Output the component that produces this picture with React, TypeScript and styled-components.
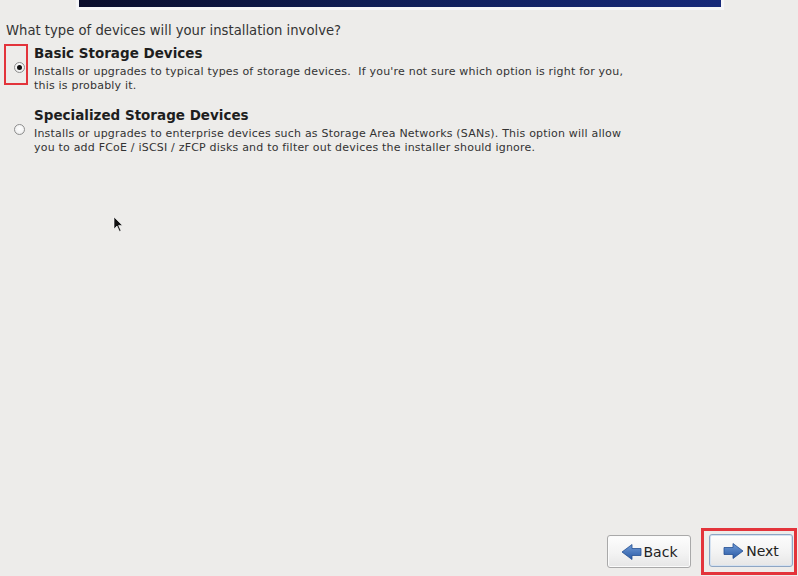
import * as React from 'react'
import styled, { createGlobalStyle } from 'styled-components'

const GlobalStyle = createGlobalStyle`
  html, body {
    margin: 0;
    padding: 0;
    background: #edecea;
  }

  body {
    font-family: 'DejaVu Sans', 'Liberation Sans', sans-serif;
    color: #2c2c2c;
  }
`

const Page = styled.div`
  position: relative;
  width: 798px;
  height: 576px;
  display: flex;
  flex-direction: column;
  overflow: hidden;
  background: #edecea;
`

const BannerFrame = styled.div`
  margin-left: 76px;
  width: 642px;
  padding: 0 3px 3px;
  background: #f5f5f7;
`

const Banner = styled.div`
  height: 7px;
  background: linear-gradient(to right, #0a0d2c 0%, #0f1d55 45%, #16297a 100%);
`

const Question = styled.p`
  margin: 13px 0 0 6px;
  font-size: 13.2px;
  line-height: 16px;
  color: #333;
`

const Options = styled.div`
  display: flex;
  flex-direction: column;
  gap: 14px;
  margin-top: 5px;
`

const Option = styled.div`
  display: flex;
  align-items: flex-start;
  margin-left: 4px;
`

const RadioCell = styled('div')<{ $highlight?: boolean }>`
  width: 24px;
  height: 41px;
  box-sizing: border-box;
  border: 2px solid ${ props => props.$highlight ? '#e3343b' : 'transparent' };
  display: flex;
  align-items: center;
  padding: 6px 0 0 8px;
  margin-right: 6px;
`

const Radio = styled('span')<{ $checked?: boolean }>`
  width: 11px;
  height: 11px;
  box-sizing: border-box;
  border-radius: 50%;
  border: 1px solid #8e8e8e;
  background: radial-gradient(circle at 50% 40%, #ffffff 0%, #f2f2f2 60%, #dcdcdc 100%);
  display: flex;
  align-items: center;
  justify-content: center;

  &::after {
    content: '';
    width: 5px;
    height: 5px;
    border-radius: 50%;
    background: #111;
    display: ${ props => props.$checked ? 'block' : 'none' };
  }
`

const OptionText = styled.div`
  display: flex;
  flex-direction: column;
`

const OptionTitle = styled.div`
  font-size: 13.5px;
  font-weight: bold;
  line-height: 18px;
  padding-bottom: 3px;
  color: #1e1e1e;
`

const OptionDesc = styled.div`
  font-size: 11px;
  letter-spacing: 0.2px;
  line-height: 13.5px;
  color: #333;
  white-space: pre-wrap;
`

const Spacer = styled.div`
  flex: 1;
`

const Footer = styled.div`
  display: flex;
  justify-content: flex-end;
  align-items: center;
  gap: 10px;
  padding: 0 1px 1px 0;
`

const NextFrame = styled.div`
  border: 3px solid #e3343b;
  padding: 3px 1px 5px 5px;
`

const Button = styled('button')<{ $focused?: boolean }>`
  width: 84px;
  height: 33px;
  box-sizing: border-box;
  display: flex;
  align-items: center;
  justify-content: center;
  gap: 2px;
  border: 1px solid ${ props => props.$focused ? '#8ea6c4' : '#a9a9a9' };
  border-radius: 3px;
  background: linear-gradient(to bottom, #fdfdfd 0%, #f3f3f3 55%, #e6e6e6 100%);
  box-shadow: inset 0 0 0 1px ${ props => props.$focused ? '#d5e2f1' : '#fbfbfb' };
  font-family: 'DejaVu Sans', 'Liberation Sans', sans-serif;
  font-size: 14px;
  color: #222;
  padding: 0;
`

const Cursor = styled.svg`
  position: absolute;
  left: 113px;
  top: 216px;
`

const ArrowIcon = ({ direction }: { direction: 'left' | 'right' }) => (
  <svg width="21" height="16" viewBox="0 0 21 16">
    <defs>
      <linearGradient id={ `arrow-${ direction }` } x1="0" y1="0" x2="0" y2="1">
        <stop offset="0" stopColor="#6f9ad6" />
        <stop offset="1" stopColor="#2a5aa5" />
      </linearGradient>
    </defs>
    <path
      d={ direction === 'right'
        ? 'M1 4.5 H10 V0.5 L20 8 L10 15.5 V11.5 H1 Z'
        : 'M20 4.5 H11 V0.5 L1 8 L11 15.5 V11.5 H20 Z' }
      fill={ `url(#arrow-${ direction })` }
      stroke="#244f92"
      strokeWidth="0.8"
      strokeLinejoin="round"
    />
  </svg>
)

const options = [
  {
    id: 'basic',
    title: 'Basic Storage Devices',
    lines: [
      'Installs or upgrades to typical types of storage devices.  If you\'re not sure which option is right for you,',
      'this is probably it.',
    ],
    checked: true,
  },
  {
    id: 'specialized',
    title: 'Specialized Storage Devices',
    lines: [
      'Installs or upgrades to enterprise devices such as Storage Area Networks (SANs). This option will allow',
      'you to add FCoE / iSCSI / zFCP disks and to filter out devices the installer should ignore.',
    ],
    checked: false,
  },
]

export default function App() {
  return (
    <Page>
      <GlobalStyle />
      <BannerFrame>
        <Banner />
      </BannerFrame>
      <Question>What type of devices will your installation involve?</Question>
      <Options>
        {
          options.map(option => (
            <Option key={ option.id }>
              <RadioCell $highlight={ option.checked }>
                <Radio $checked={ option.checked } />
              </RadioCell>
              <OptionText>
                <OptionTitle>{ option.title }</OptionTitle>
                { option.lines.map(line => <OptionDesc key={ line }>{ line }</OptionDesc>) }
              </OptionText>
            </Option>
          ))
        }
      </Options>
      <Spacer />
      <Footer>
        <Button>
          <ArrowIcon direction="left" />
          Back
        </Button>
        <NextFrame>
          <Button $focused>
            <ArrowIcon direction="right" />
            Next
          </Button>
        </NextFrame>
      </Footer>
      <Cursor width="10" height="17" viewBox="0 0 10 17">
        <path d="M1 1 L1 13 L4 10 L6.5 15.5 L8 14.8 L5.6 9.4 L9.5 9.4 Z" fill="#111" stroke="#fff" strokeWidth="0.6" />
      </Cursor>
    </Page>
  )
}
